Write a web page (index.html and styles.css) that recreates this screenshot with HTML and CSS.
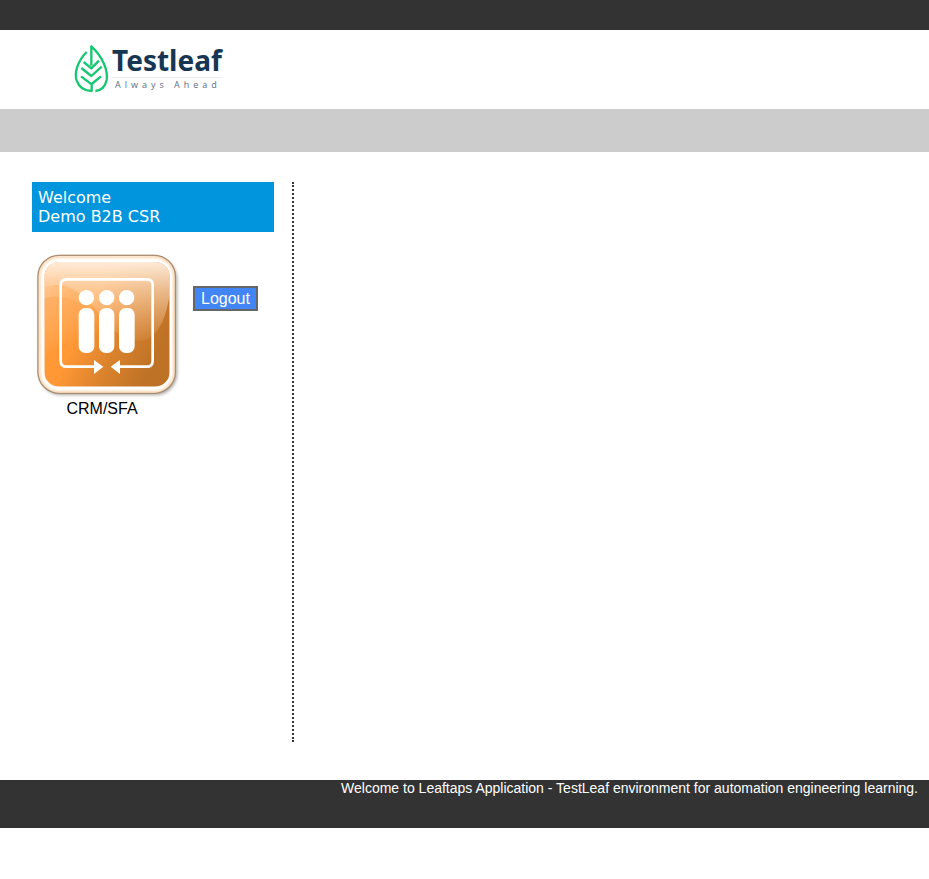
FILE: index.html
```html
<!DOCTYPE html>
<html lang="en">
<head>
<meta charset="utf-8">
<title>Leaftaps - TestLeaf Automation Platform</title>
<link rel="stylesheet" href="styles.css">
</head>
<body>
<div class="top-bar"></div>
<header class="masthead">
  <svg class="leaf" viewBox="0 0 108 150" aria-hidden="true">
    <g fill="none" stroke="#16c772" stroke-width="7" stroke-linejoin="round">
      <path d="M38 24C12 50 0 85 8 110C16 132 32 141 53 141V121L21 97"/>
      <path d="M64 141C82 139 94 127 98 108C103 78 84 36 52 7V65"/>
      <path d="M29 54L52 73L75 50"/>
      <path d="M22 72L52 96L83 68"/>
      <path d="M53 120L81 97"/>
    </g>
  </svg>
  <div class="wordmark">
    <div class="brand">Testleaf</div>
    <div class="tagline">Always Ahead</div>
  </div>
</header>
<div class="nav-bar"></div>
<main class="content">
  <section class="sidebar">
    <h2 class="welcome">Welcome<br>Demo B2B CSR</h2>
    <div class="actions">
      <a class="app-link" href="#crm">
        <svg class="app-icon" viewBox="24 33 444 444" aria-hidden="true">
          <defs>
            <linearGradient id="base" gradientUnits="userSpaceOnUse" x1="150" y1="300" x2="370" y2="400">
              <stop offset="0" stop-color="#ff9835"/>
              <stop offset=".5" stop-color="#da822c"/>
              <stop offset="1" stop-color="#be7226"/>
            </linearGradient>
            <linearGradient id="gloss" gradientUnits="userSpaceOnUse" x1="0" y1="66" x2="0" y2="302">
              <stop offset="0" stop-color="#fff1e4" stop-opacity=".94"/>
              <stop offset=".35" stop-color="#ffe8d2" stop-opacity=".6"/>
              <stop offset="1" stop-color="#ffd9b3" stop-opacity=".08"/>
            </linearGradient>
            <linearGradient id="band" gradientUnits="userSpaceOnUse" x1="80" y1="130" x2="170" y2="300">
              <stop offset="0" stop-color="#fff" stop-opacity=".42"/>
              <stop offset="1" stop-color="#fff" stop-opacity="0"/>
            </linearGradient>
            <linearGradient id="wave" gradientUnits="userSpaceOnUse" x1="70" y1="160" x2="150" y2="330">
              <stop offset="0" stop-color="#f98e2e" stop-opacity=".28"/>
              <stop offset="1" stop-color="#ff9835" stop-opacity="0"/>
            </linearGradient>
            <clipPath id="face"><rect x="58" y="66" width="376" height="374" rx="44"/></clipPath>
            <filter id="shade" x="-10%" y="-10%" width="120%" height="120%"><feGaussianBlur stdDeviation="5"/></filter>
            <filter id="edge"><feGaussianBlur stdDeviation="3"/></filter>
          </defs>
          <rect x="43" y="52" width="414" height="414" rx="66" fill="#777" opacity=".6" filter="url(#shade)"/>
          <rect x="39" y="46" width="412" height="414" rx="64" fill="#fff" stroke="#7d6a5a" stroke-width="4"/>
          <rect x="43" y="50" width="404" height="406" rx="60" fill="none" stroke="#fbcfa0" stroke-width="6" filter="url(#edge)"/>
          <g clip-path="url(#face)">
            <rect x="58" y="66" width="376" height="374" fill="url(#base)"/>
            <path d="M58 144C107 123 149 145 186 181C238 230 265 302 345 302L320 440H58Z" fill="url(#band)"/>
            <path d="M58 66H434V160C426 230 397 302 345 302C265 302 238 230 186 181C149 145 107 123 58 144Z" fill="url(#gloss)"/>
            <path d="M58 175C126 155 176 194 211 238C255 291 287 343 350 345L320 440H58Z" fill="url(#wave)"/>
          </g>
          <path d="M210 380H125Q107 380 107 362V135Q107 118 125 118H365Q383 118 383 135V362Q383 380 365 380H282" fill="none" stroke="#fff" stroke-width="8"/>
          <g fill="#fff">
            <path d="M207 360L235 380L207 402ZM285 360L257 380L285 402Z"/>
            <circle cx="184" cy="173" r="23"/><circle cx="245" cy="173" r="23"/><circle cx="305" cy="173" r="23"/>
            <rect x="161" y="204" width="47" height="135" rx="20"/>
            <rect x="222" y="204" width="46" height="135" rx="20"/>
            <rect x="282" y="204" width="47" height="135" rx="20"/>
          </g>
        </svg>
        <span class="app-name">CRM/SFA</span>
      </a>
      <button class="logout" type="button">Logout</button>
    </div>
  </section>
</main>
<footer class="footer">Welcome to Leaftaps Application - TestLeaf environment for automation engineering learning.</footer>
</body>
</html>
```
FILE: styles.css
```css
* { box-sizing: border-box; }
body {
  margin: 0;
  background: #fff;
  color: #000;
  font: 16px/20px "Liberation Sans", Arial, sans-serif;
}
.top-bar { height: 30px; background: #333; }
.masthead {
  display: flex;
  align-items: flex-start;
  gap: 2px;
  height: 79px;
  padding: 14px 74px;
}
.leaf { width: 36px; height: 50px; }
.brand {
  padding-bottom: 1px;
  border-bottom: 1px solid #e9edf1;
  color: #163653;
  font: bold 28px/32px "Noto Sans", sans-serif;
}
.tagline {
  padding-left: 3px;
  color: #5b6d80;
  font: 9px/14px "Open Sans", sans-serif;
  letter-spacing: 4px;
  white-space: nowrap;
}
.nav-bar { height: 43px; background: #ccc; }
.content { padding: 30px 32px 38px; }
.sidebar {
  width: 262px;
  min-height: 560px;
  padding-right: 18px;
  border-right: 2px dotted #333;
}
.welcome {
  margin: 0 0 19px;
  padding: 6px;
  background: #0095dd;
  color: #fff;
  font: 16px/19px "DejaVu Sans", Verdana, sans-serif;
}
.actions { display: flex; align-items: flex-start; gap: 12px; }
.app-link {
  display: flex;
  flex-direction: column;
  width: 148px;
  margin-left: 1px;
  color: #000;
  text-decoration: none;
}
.app-icon { width: 148px; height: 148px; }
.app-name { padding-right: 10px; text-align: center; }
.logout {
  height: 25px;
  margin-top: 35px;
  padding: 0 6px;
  border: 2px solid #666;
  background: #4285f4;
  color: #fff;
  font: 16px/18px "Liberation Sans", Arial, sans-serif;
}
.footer {
  min-height: 48px;
  padding-right: 11px;
  background: #333;
  color: #fff;
  font-size: 14px;
  line-height: 16px;
  text-align: right;
}
```
